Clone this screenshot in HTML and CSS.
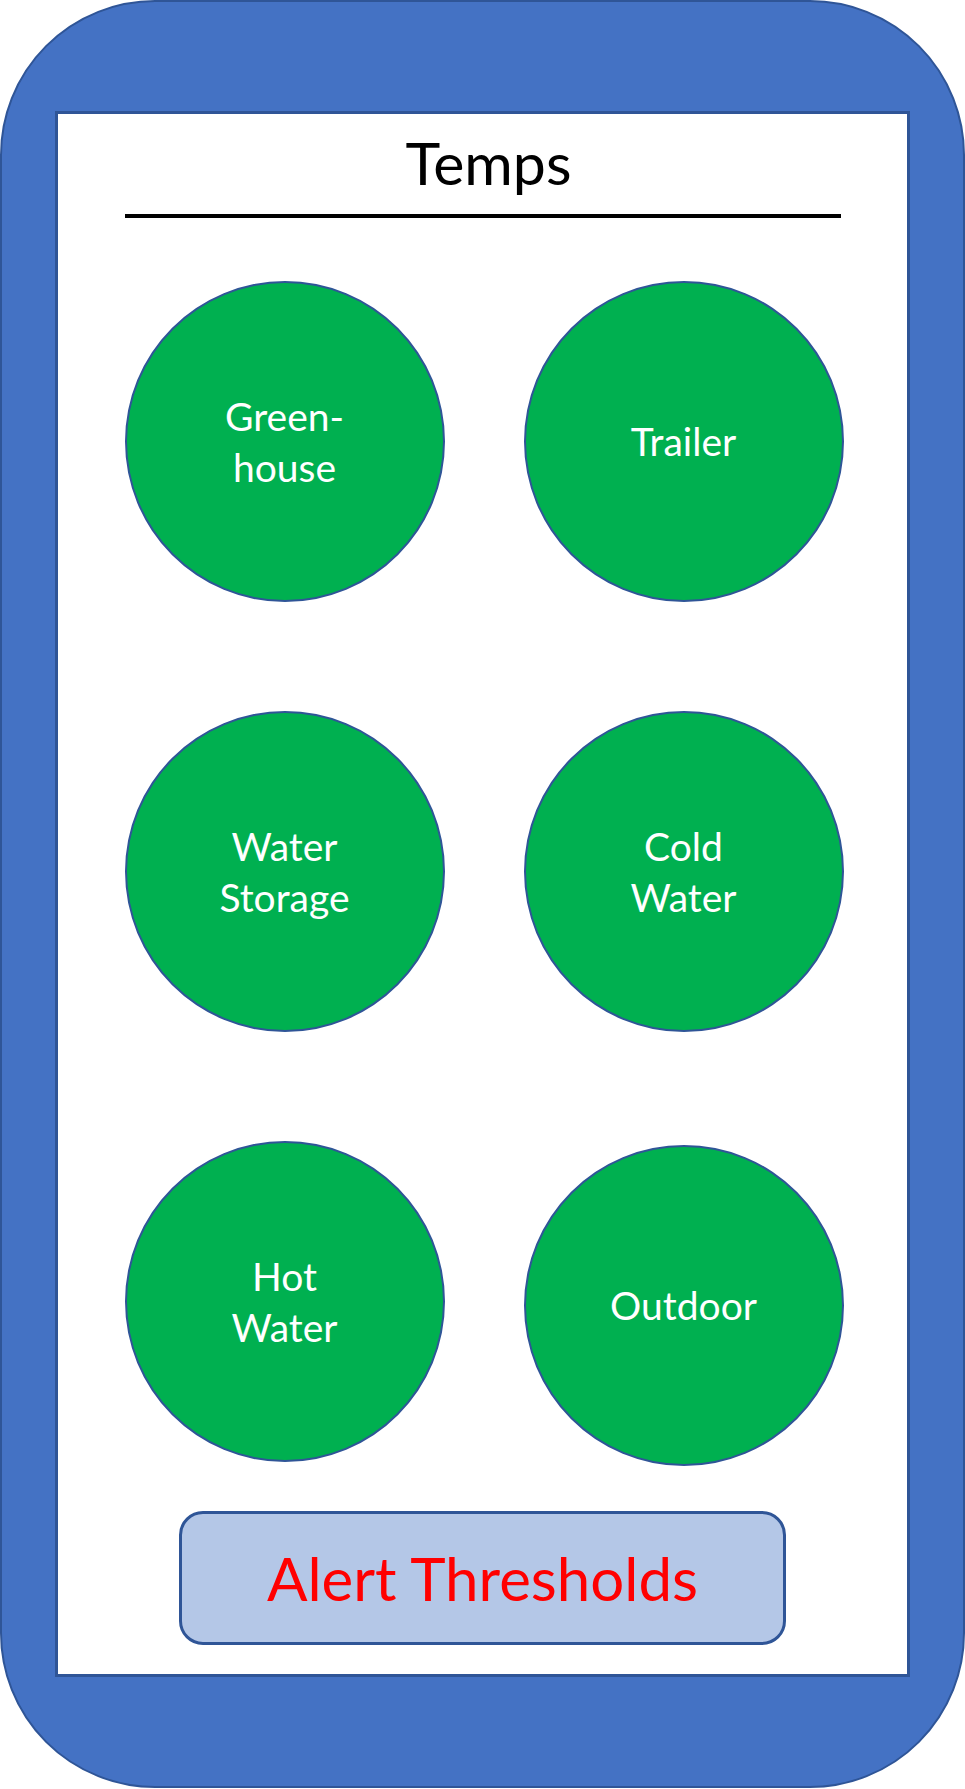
FILE: index.html
```html
<!DOCTYPE html>
<html lang="en">
<head>
<meta charset="utf-8">
<title>Temps</title>
<link rel="stylesheet" href="styles.css">
</head>
<body>
  <div class="phone">
    <div class="screen">
      <h1 class="title">Temps</h1>
      <div class="rule"></div>
      <div class="sensors">
        <div class="sensor">Green-<br>house</div>
        <div class="sensor">Trailer</div>
        <div class="sensor">Water<br>Storage</div>
        <div class="sensor">Cold<br>Water</div>
        <div class="sensor">Hot<br>Water</div>
        <div class="sensor sensor-shift">Outdoor</div>
      </div>
      <button class="alert-btn" type="button">Alert Thresholds</button>
    </div>
  </div>
</body>
</html>
```

FILE: styles.css
```css
* {
  box-sizing: border-box;
}

html, body {
  margin: 0;
  padding: 0;
  background: #ffffff;
}

body {
  width: 965px;
  height: 1789px;
  font-family: Lato, "Open Sans", "Liberation Sans", sans-serif;
}

.phone {
  width: 965px;
  height: 1788px;
  background: #4472c4;
  border: 2px solid #2f5597;
  border-radius: 155px;
  padding: 109px 53px;
}

.screen {
  width: 855px;
  height: 1566px;
  background: #ffffff;
  border: 3px solid #2f5597;
  display: flex;
  flex-direction: column;
  align-items: center;
  padding-top: 15px;
}

.title {
  margin: 0;
  padding-left: 12px;
  font-size: 59px;
  line-height: 68px;
  font-weight: 400;
  color: #000000;
}

.rule {
  width: 716px;
  height: 4px;
  background: #000000;
  margin-top: 17px;
}

.sensors {
  margin-top: 63px;
  margin-left: 3px;
  display: grid;
  grid-template-columns: 320px 320px;
  grid-auto-rows: 321px;
  column-gap: 79px;
  row-gap: 109px;
}

.sensor {
  width: 320px;
  height: 321px;
  border-radius: 50%;
  background: #00b050;
  border: 2.5px solid #2f5597;
  color: #ffffff;
  font-size: 39px;
  line-height: 51px;
  text-align: center;
  display: flex;
  align-items: center;
  justify-content: center;
}

.sensor-shift {
  transform: translateY(4px);
}

.alert-btn {
  margin-top: 49px;
  width: 607px;
  height: 134px;
  background: #b4c7e7;
  border: 3px solid #2f5597;
  border-radius: 24px;
  color: #ff0000;
  font-family: Lato, "Open Sans", "Liberation Sans", sans-serif;
  font-size: 60px;
  line-height: 1;
  padding: 0;
}
```
